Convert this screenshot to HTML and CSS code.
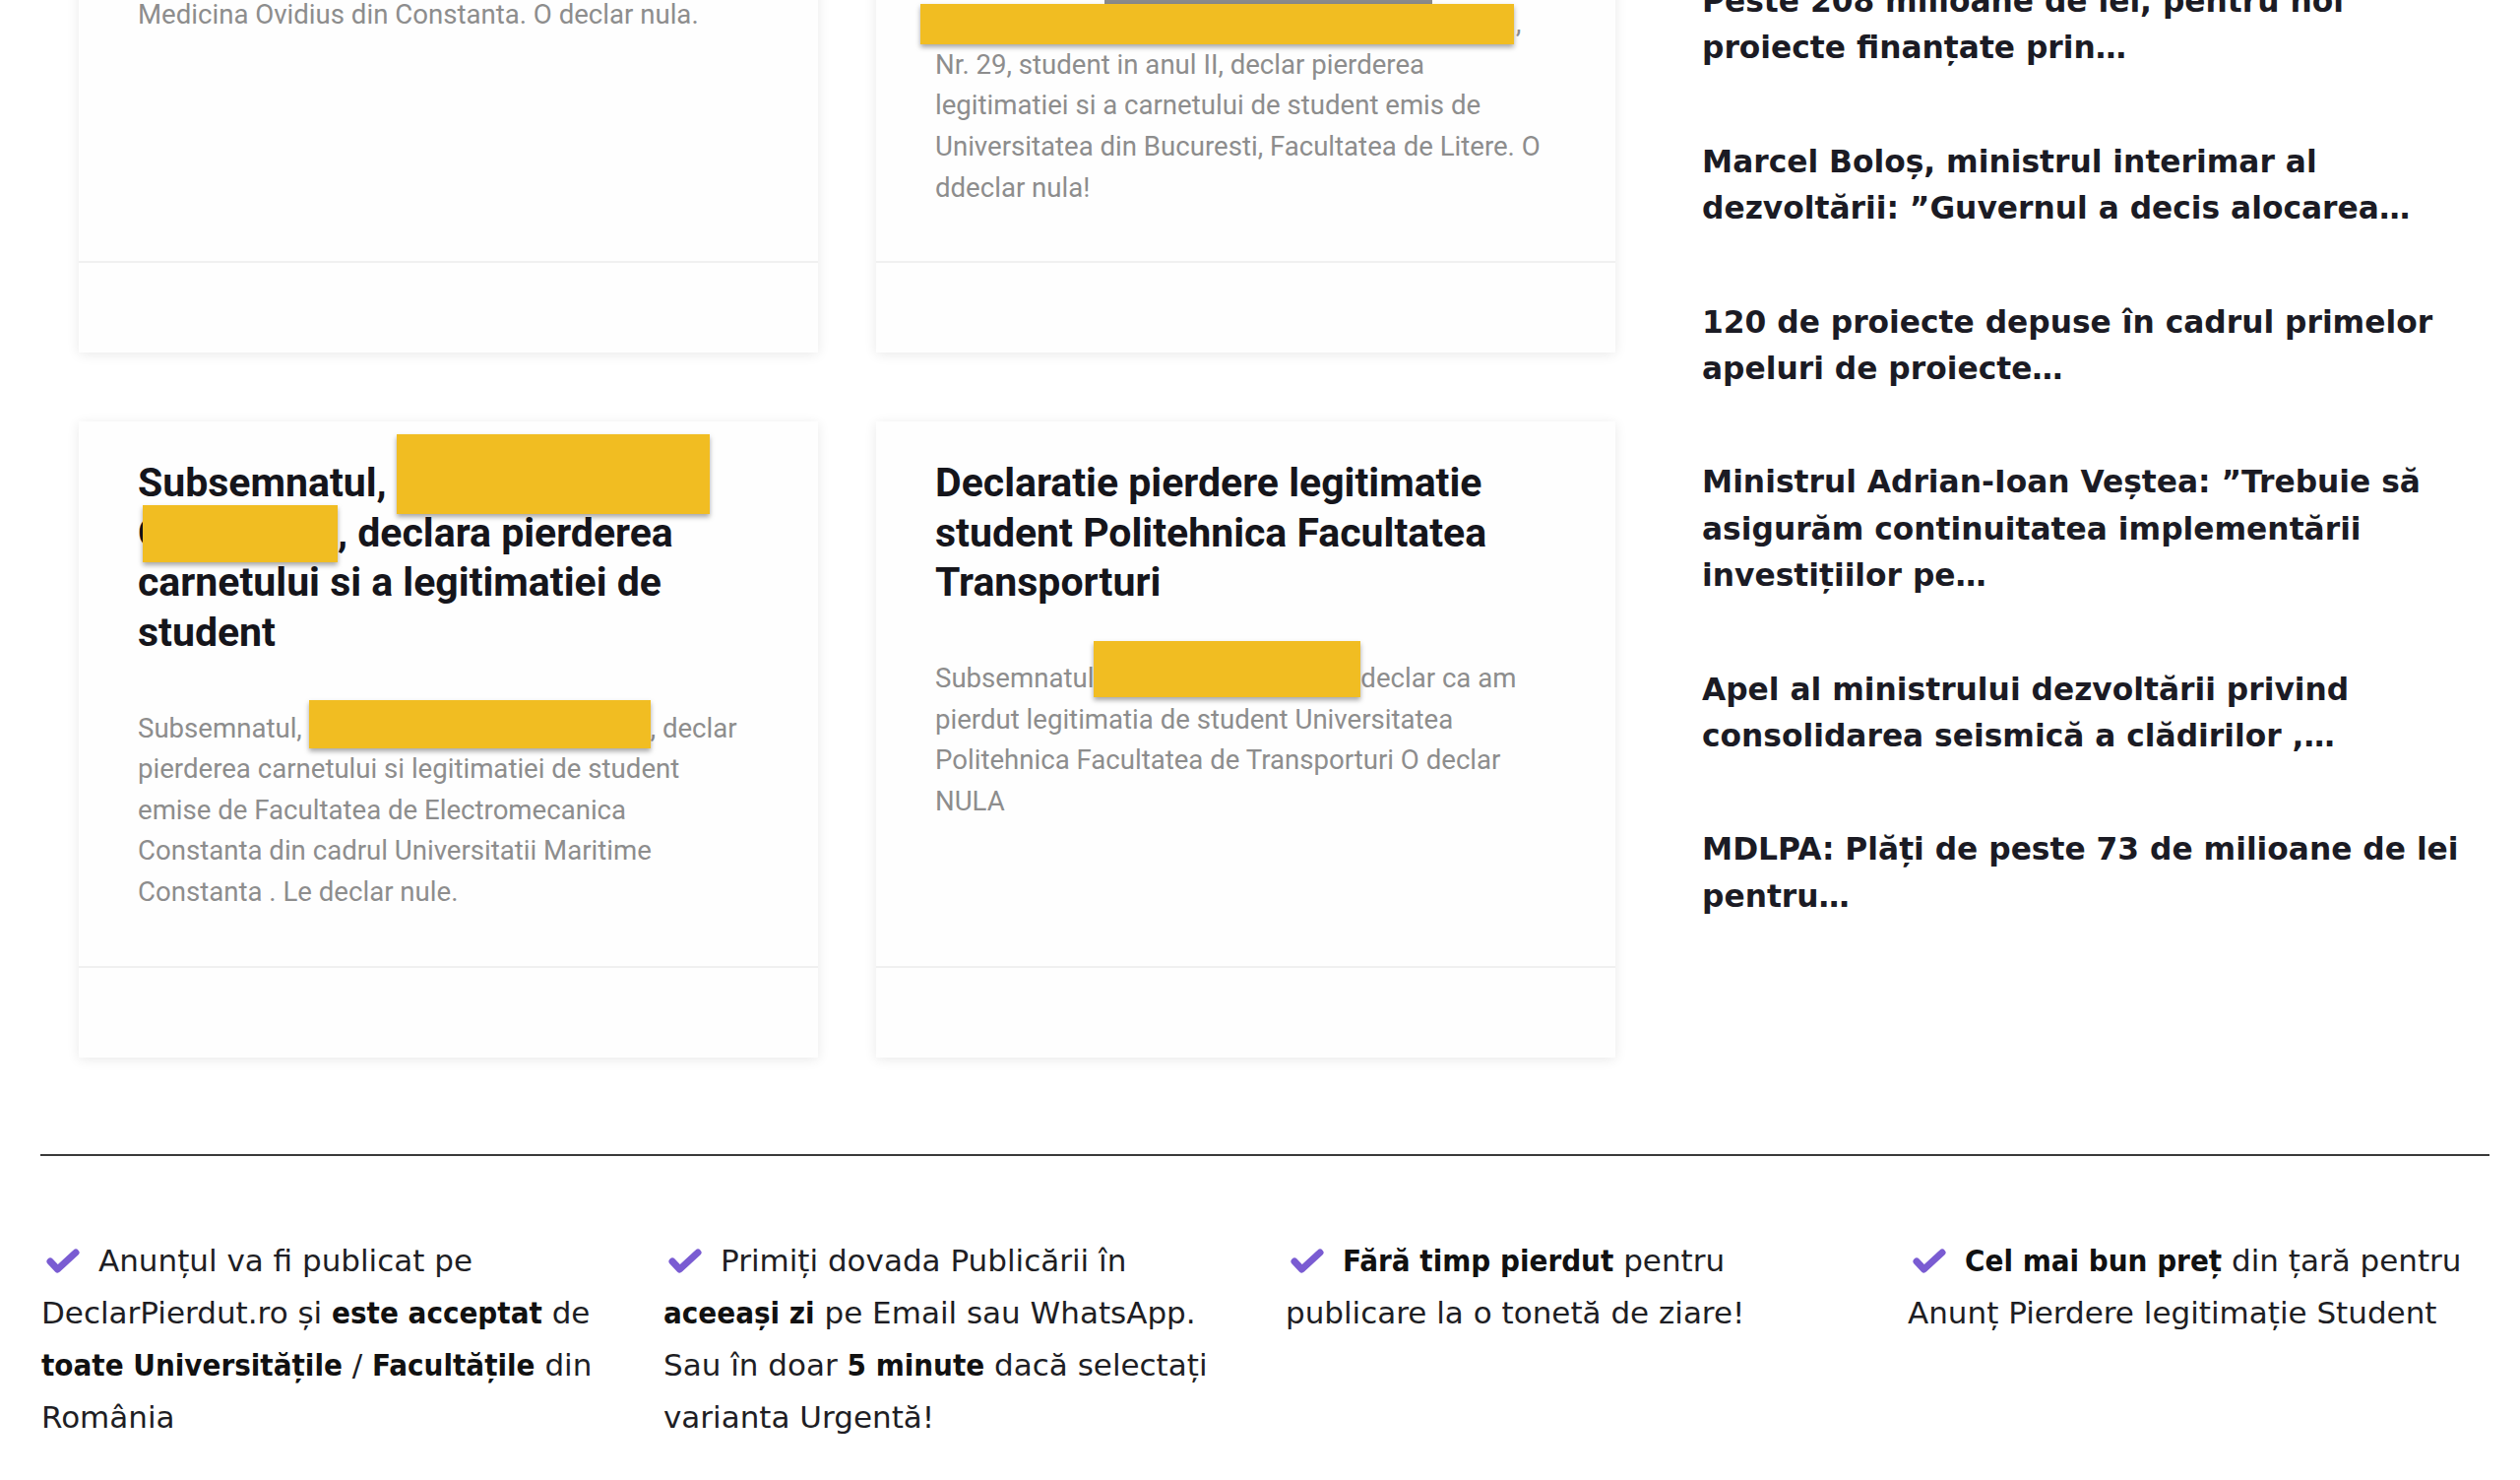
FILE: index.html
```html
<!DOCTYPE html>
<html lang="ro">
<head>
<meta charset="utf-8">
<title>Anunț Pierdere legitimație Student</title>
<link rel="stylesheet" href="styles.css">
</head>
<body>
<div class="page">
  <div class="main">
    <div class="cards">
      <article class="card">
        <div class="card-body">
          <h3 class="card-title">Legitimatie pierduta</h3>
          <p class="card-text">Declar pierderea legitimatiei de student de la<br>Medicina Ovidius din Constanta. O declar nula.</p>
        </div>
        <div class="card-foot"></div>
      </article>
      <article class="card">
        <div class="card-body">
          <h3 class="card-title">Pierdere carnet si legitimatie student Litere</h3>
          <p class="card-text"><span class="redact r-wide">Subsemnatul</span>,<br>Nr. 29, student in anul II, declar pierderea<br>legitimatiei si a carnetului de student emis de<br>Universitatea din Bucuresti, Facultatea de Litere. O<br>ddeclar nula!</p>
        </div>
        <div class="card-foot"></div>
      </article>
      <article class="card">
        <div class="card-body">
          <h3 class="card-title">Subsemnatul, <span class="redact r-t1">Nume</span> <span class="redact r-t2">C</span>, declara pierderea carnetului si a legitimatiei de student</h3>
          <p class="card-text">Subsemnatul, <span class="redact r-b1">Nume</span>, declar<br>pierderea carnetului si legitimatiei de student<br>emise de Facultatea de Electromecanica<br>Constanta din cadrul Universitatii Maritime<br>Constanta . Le declar nule.</p>
        </div>
        <div class="card-foot"></div>
      </article>
      <article class="card">
        <div class="card-body">
          <h3 class="card-title">Declaratie pierdere legitimatie student Politehnica Facultatea Transporturi</h3>
          <p class="card-text">Subsemnatul<span class="redact r-b2">Nume</span>declar ca am<br>pierdut legitimatia de student Universitatea<br>Politehnica Facultatea de Transporturi O declar<br>NULA</p>
        </div>
        <div class="card-foot"></div>
      </article>
    </div>
    <aside class="sidebar">
      <a class="news" href="#">Peste 208 milioane de lei, pentru noi proiecte finanțate prin…</a>
      <a class="news" href="#">Marcel Boloș, ministrul interimar al dezvoltării: ”Guvernul a decis alocarea…</a>
      <a class="news" href="#">120 de proiecte depuse în cadrul primelor apeluri de proiecte…</a>
      <a class="news" href="#">Ministrul Adrian-Ioan Veștea: ”Trebuie să asigurăm continuitatea implementării investițiilor pe…</a>
      <a class="news" href="#">Apel al ministrului dezvoltării privind consolidarea seismică a clădirilor ,…</a>
      <a class="news" href="#">MDLPA: Plăți de peste 73 de milioane de lei pentru…</a>
    </aside>
  </div>
  <hr class="divider">
  <div class="features">
    <p class="feature"><svg class="check" viewBox="0 0 40 26" width="40" height="26"><polyline points="9,13 16.5,21 35,4"/></svg>Anunțul va fi publicat pe DeclarPierdut.ro și <b>este acceptat</b> de <b>toate Universitățile</b> / <b>Facultățile</b> din România</p>
    <p class="feature"><svg class="check" viewBox="0 0 40 26" width="40" height="26"><polyline points="9,13 16.5,21 35,4"/></svg>Primiți dovada Publicării în <b>aceeași zi</b> pe Email sau WhatsApp. Sau în doar <b>5 minute</b> dacă selectați varianta Urgentă!</p>
    <p class="feature"><svg class="check" viewBox="0 0 40 26" width="40" height="26"><polyline points="9,13 16.5,21 35,4"/></svg><b>Fără timp pierdut</b> pentru publicare la o tonetă de ziare!</p>
    <p class="feature"><svg class="check" viewBox="0 0 40 26" width="40" height="26"><polyline points="9,13 16.5,21 35,4"/></svg><b>Cel mai bun preț</b> din țară pentru Anunț Pierdere legitimație Student</p>
  </div>
</div>
</body>
</html>
```
FILE: styles.css
```css
* { box-sizing: border-box; }
html, body { margin: 0; padding: 0; background: #ffffff; }
body {
  font-family: Roboto, "Liberation Sans", Arial, sans-serif;
  color: #1b1b22;
  overflow: hidden;
  height: 1503px;
}
.page { width: 2560px; }

.main {
  display: flex;
  align-items: flex-start;
  margin-top: -186px;
  padding-left: 80px;
}

.cards {
  display: grid;
  grid-template-columns: 751px 751px;
  column-gap: 59px;
  row-gap: 70px;
}

.card {
  display: flex;
  flex-direction: column;
  background: #fefefe;
  box-shadow: 0 2px 12px rgba(0, 0, 0, 0.09);
}
.card-body {
  flex: 1;
  padding: 37px 60px 54px 60px;
}
.card-foot {
  height: 93px;
  border-top: 2px solid #f0f0f0;
}
.card-title {
  margin: 0 0 51px 0;
  font-size: 41px;
  line-height: 50.6px;
  font-weight: 700;
  color: #15151b;
}
.card-text {
  margin: 0;
  font-size: 27.6px;
  line-height: 41.6px;
  font-weight: 400;
  color: #8d8d8d;
  white-space: nowrap;
}

.redact {
  position: relative;
  display: inline-block;
  vertical-align: top;
  color: transparent;
  white-space: nowrap;
}
.redact::after {
  content: "";
  position: absolute;
  background: #f1bd22;
  box-shadow: 0 3px 5px rgba(0, 0, 0, 0.35);
}
.r-wide { width: 590px; }
.r-wide::before {
  content: "";
  position: absolute;
  left: 172px; top: -30px;
  width: 333px; height: 31px;
  background: #8a8a8a;
}
.r-wide::after { left: -15px; top: 1px; width: 603px; height: 41px; }
.r-t1 { width: 318px; }
.r-t1::after { left: 0; top: -24px; width: 318px; height: 81px; }
.r-t2 { width: 203px; color: #15151b; }
.r-t2::after { left: 5px; top: -3px; width: 198px; height: 58px; }
.r-b1 { width: 347px; }
.r-b1::after { left: 0; top: -8px; width: 347px; height: 49px; }
.r-b2 { width: 271px; }
.r-b2::after { left: 0; top: -17px; width: 271px; height: 57px; }

.sidebar {
  width: 800px;
  margin-left: 88px;
  padding-top: 164px;
  display: flex;
  flex-direction: column;
  gap: 68px;
}
.news {
  display: block;
  font-family: "DejaVu Sans", Verdana, sans-serif;
  font-size: 31.3px;
  line-height: 47.4px;
  font-weight: 700;
  color: #1b1b24;
  text-decoration: none;
}

.divider {
  margin: 98px 31px 0 41px;
  border: 0;
  height: 2px;
  background: #3a3a3a;
}

.features {
  display: grid;
  grid-template-columns: repeat(4, 580px);
  column-gap: 52px;
  padding-left: 42px;
  margin-top: 80px;
}
.feature {
  margin: 0;
  font-family: "DejaVu Sans", Verdana, sans-serif;
  font-size: 31px;
  line-height: 53px;
  color: #1e1e24;
}
.feature b {
  font-family: "DejaVu Sans Condensed", "DejaVu Sans", Verdana, sans-serif;
  font-stretch: condensed;
  font-weight: 700;
  color: #111;
}
.check {
  display: inline-block;
  vertical-align: -3px;
  margin-right: 18px;
  fill: none;
  stroke: #7a5cd2;
  stroke-width: 7;
  stroke-linecap: round;
  stroke-linejoin: round;
}
```
